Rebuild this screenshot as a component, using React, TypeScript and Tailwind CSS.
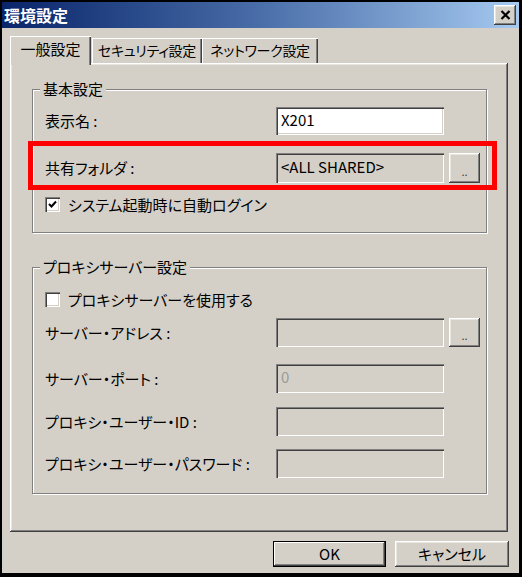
import React from 'react';

const raised =
  'shadow-[inset_-1px_-1px_0_#404040,inset_1px_1px_0_#ffffff,inset_-2px_-2px_0_#808080,inset_2px_2px_0_#e8e6e0]';
const sunken =
  'shadow-[inset_1px_1px_0_#808080,inset_2px_2px_0_#404040,inset_-1px_-1px_0_#ffffff,inset_-2px_-2px_0_#d4d0c8]';

const Field: React.FC<{ value?: string; white?: boolean; muted?: boolean; h?: string }> = ({ value, white, muted, h = 'h-[29px]' }) => (
  <div
    className={`w-[168px] ${h} ${sunken} ${white ? 'bg-white' : 'bg-[#d4d0c8]'} flex items-center pl-[5px] pb-[2px] text-[15px] ${muted ? 'text-[#9a9a9a]' : 'text-black'}`}
  >
    {value}
  </div>
);

const DotsButton: React.FC<{ h?: string }> = ({ h = 'h-[30px]' }) => (
  <div className={`ml-[5px] w-[31px] ${h} ${raised} bg-[#d4d0c8] flex items-end justify-center pb-[6px] text-[11px] leading-none text-[#404040]`}>
    ..
  </div>
);

const Checkbox: React.FC<{ checked?: boolean }> = ({ checked }) => (
  <div className={`w-[15px] h-[15px] bg-white ${sunken} flex items-center justify-center`}>
    {checked && (
      <svg width="9" height="9" viewBox="0 0 9 9">
        <path d="M1 4 L3.5 6.5 L8 1.5" stroke="#000" strokeWidth="2" fill="none" />
      </svg>
    )}
  </div>
);

const Row: React.FC<{ label: string; className?: string; children: React.ReactNode }> = ({ label, className = '', children }) => (
  <div className={`flex items-center ${className}`}>
    <div className="w-[231px] text-[15px] leading-[20px]">{label}</div>
    {children}
  </div>
);

const Group: React.FC<{ title: string; className?: string; children: React.ReactNode }> = ({ title, className = '', children }) => (
  <div className={`relative w-[455px] border border-[#808080] shadow-[1px_1px_0_#ffffff,inset_1px_1px_0_#ffffff] ${className}`}>
    <span className="absolute left-[7px] -top-[11px] px-[3px] bg-[#d4d0c8] text-[15px] leading-[20px]">{title}</span>
    {children}
  </div>
);

export default function App() {
  return (
    <div
      className="w-[522px] h-[577px] bg-[#d4d0c8] border-black border-l-2 border-t-2 border-r-[3px] border-b-[4px] flex flex-col text-black [font-feature-settings:'palt']"
      style={{ fontFamily: '"Noto Sans CJK JP", "Noto Sans", sans-serif' }}
    >
      {/* title bar */}
      <div className="h-[26px] flex items-center justify-between bg-linear-to-r from-[#0a246a] via-[#4a6ea8] to-[#a6caf0]">
        <span className="pl-[2px] text-white font-bold text-[16px] leading-none">環境設定</span>
        <div className={`mr-[3px] w-[22px] h-[20px] bg-[#d4d0c8] ${raised} flex items-center justify-center`}>
          <svg width="11" height="10" viewBox="0 0 11 10">
            <path d="M1.5 1 L9.5 9 M9.5 1 L1.5 9" stroke="#000" strokeWidth="2.2" />
          </svg>
        </div>
      </div>

      {/* tabs */}
      <div className="mt-[8px] ml-[8px] flex items-end h-[27px]">
        <div className="relative z-10 -mb-[2px] w-[81px] h-[29px] bg-[#d4d0c8] shadow-[inset_1px_1px_0_#ffffff,inset_-1px_0_0_#404040,inset_-2px_0_0_#808080] flex items-center justify-center pb-[3px] text-[15px]">
          一般設定
        </div>
        <div className="ml-[1px] w-[110px] h-[25px] shadow-[inset_1px_1px_0_#ffffff,inset_-1px_0_0_#404040,inset_-2px_0_0_#808080] flex items-center justify-center pb-[1px] text-[14px] tracking-[-0.3px]">
          セキュリティ設定
        </div>
        <div className="w-[116px] h-[25px] shadow-[inset_1px_1px_0_#ffffff,inset_-1px_0_0_#404040,inset_-2px_0_0_#808080] flex items-center justify-center pb-[1px] text-[14px] tracking-[-0.3px]">
          ネットワーク設定
        </div>
      </div>

      {/* tab panel */}
      <div className={`ml-[8px] w-[498px] h-[469px] ${raised} pl-[22px] pt-[26px]`}>
        <Group title="基本設定" className="h-[144px] pl-[12px]">
          <Row label="表示名 :" className="mt-[17px]">
            <Field value="X201" white h="h-[28px]" />
          </Row>
          <Row label="共有フォルダ :" className="mt-[18px]">
            <Field value="<ALL SHARED>" h="h-[30px]" />
            <DotsButton />
          </Row>
          <div className="mt-[13px] flex items-center gap-[8px] text-[15px] leading-[17px]">
            <Checkbox checked />
            <span>システム起動時に自動ログイン</span>
          </div>
          <div className="absolute left-[-5px] top-[51px] w-[469px] h-[49px] border-[5px] border-[#ff0000]" />
        </Group>

        <Group title="プロキシサーバー設定" className="mt-[34px] h-[227px] pl-[12px]">
          <div className="mt-[23px] flex items-center gap-[8px] text-[15px] leading-[17px]">
            <Checkbox />
            <span>プロキシサーバーを使用する</span>
          </div>
          <Row label="サーバー・アドレス :" className="mt-[10px]">
            <Field />
            <DotsButton h="h-[29px]" />
          </Row>
          <Row label="サーバー・ポート :" className="mt-[17px]">
            <Field value="0" muted />
          </Row>
          <Row label="プロキシ・ユーザー・ID :" className="mt-[14px]">
            <Field />
          </Row>
          <Row label="プロキシ・ユーザー・パスワード :" className="mt-[13px]">
            <Field />
          </Row>
        </Group>
      </div>

      {/* buttons */}
      <div className="mt-[9px] flex justify-end gap-[9px] pr-[10px]">
        <div className="w-[113px] h-[26px] border border-black bg-[#d4d0c8] shadow-[inset_-1px_-1px_0_#404040,inset_1px_1px_0_#ffffff,inset_-2px_-2px_0_#808080] flex items-center justify-center text-[15px]">
          OK
        </div>
        <div className={`w-[114px] h-[26px] bg-[#d4d0c8] ${raised} flex items-center justify-center text-[15px]`}>
          キャンセル
        </div>
      </div>
    </div>
  );
}
